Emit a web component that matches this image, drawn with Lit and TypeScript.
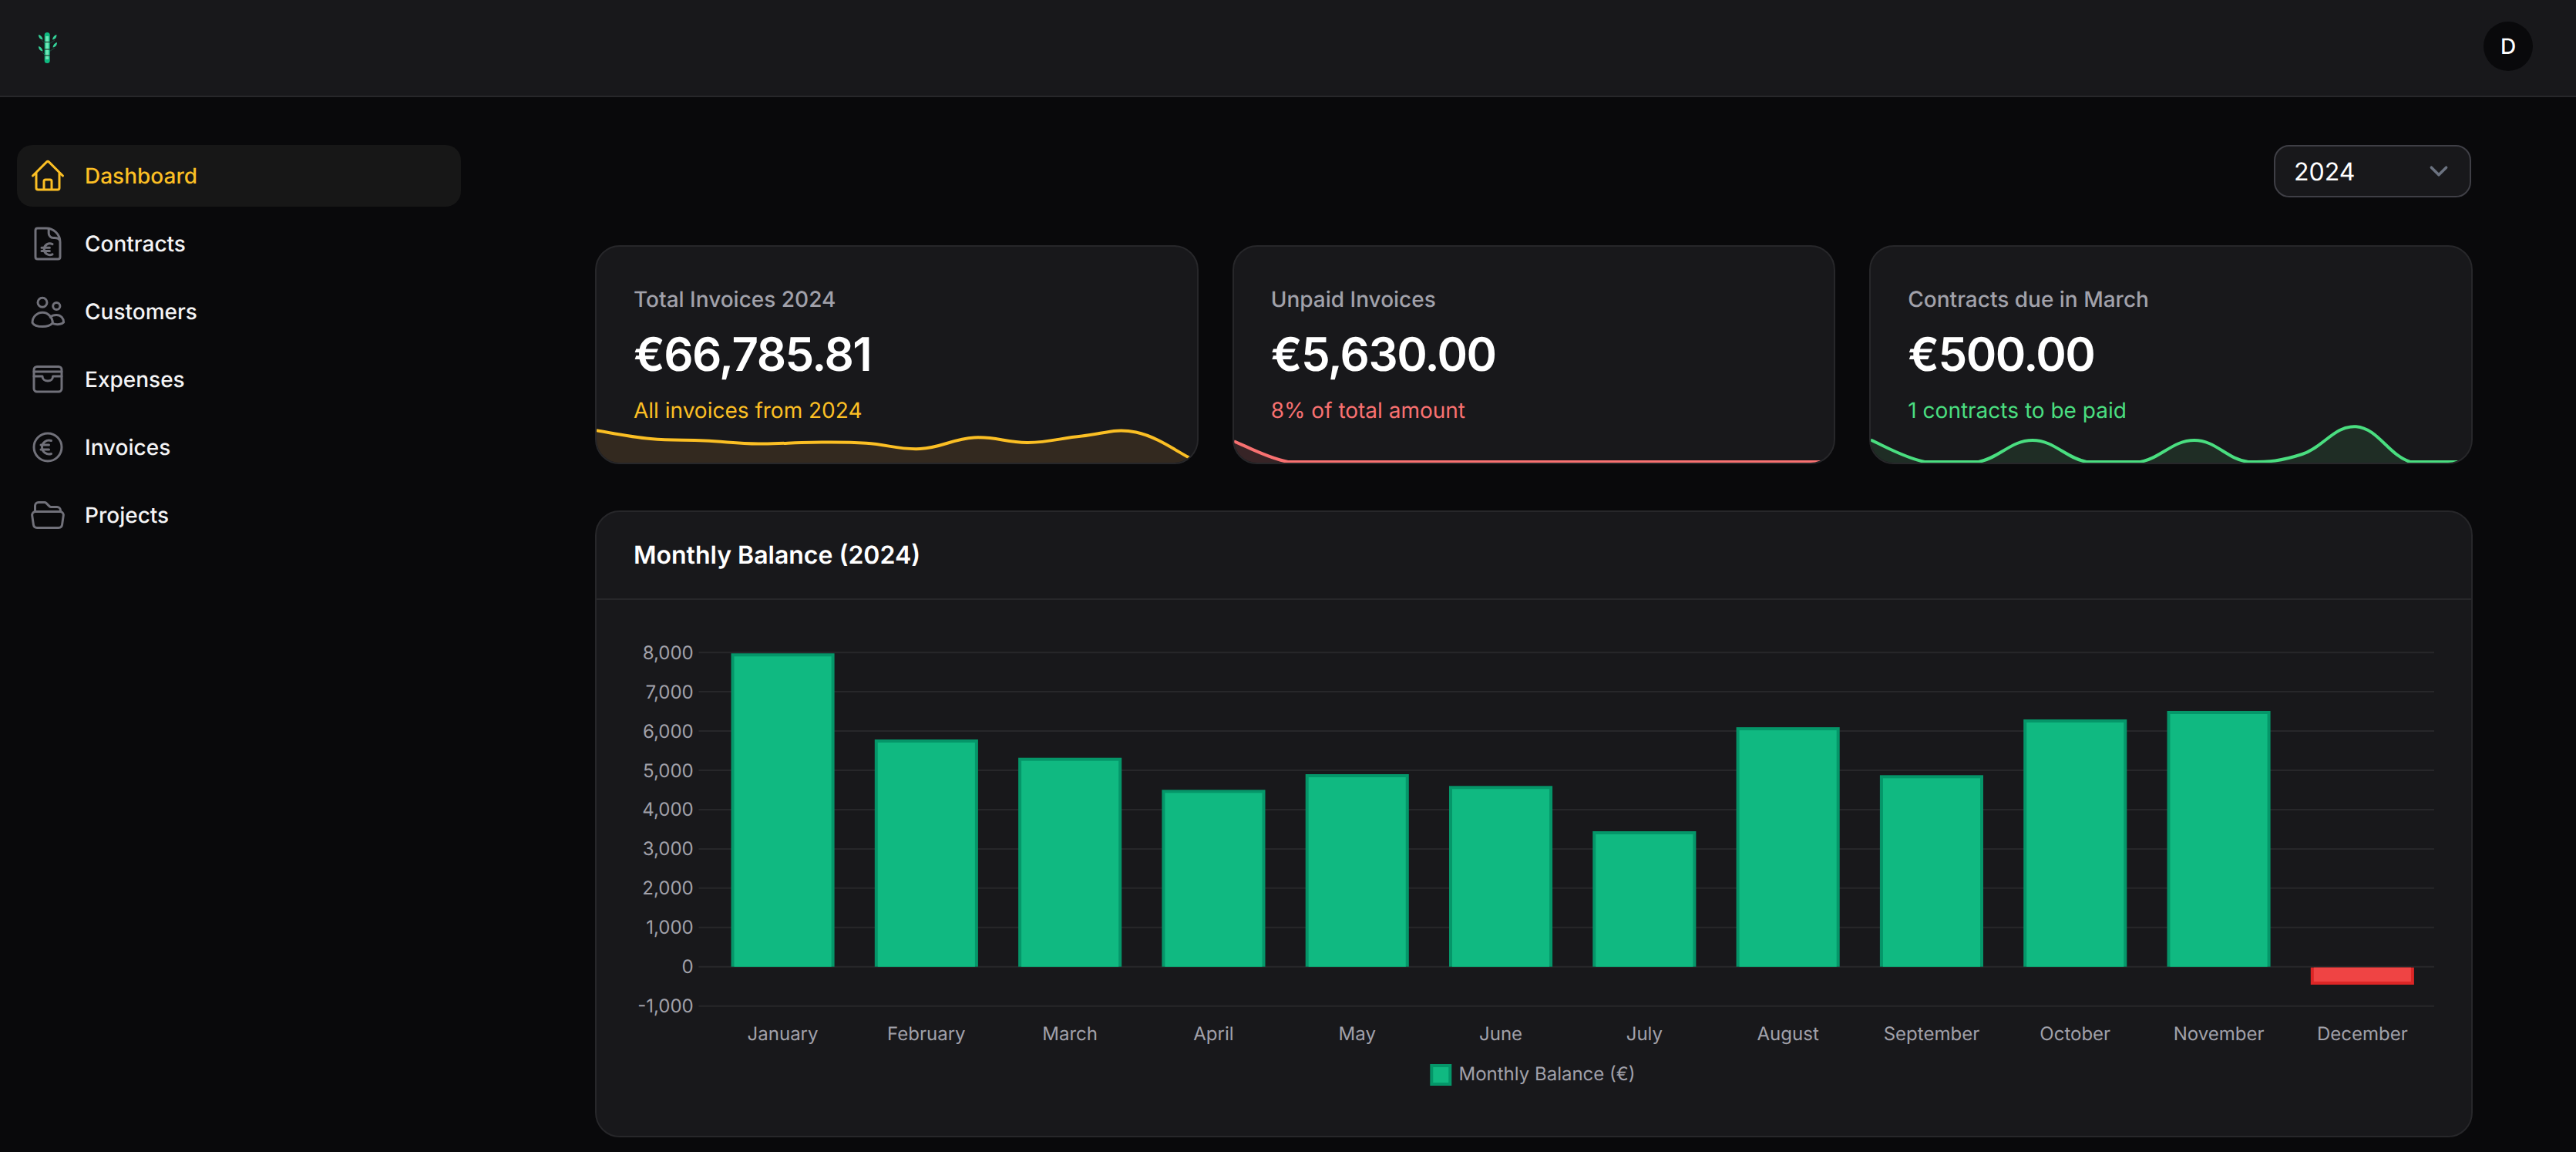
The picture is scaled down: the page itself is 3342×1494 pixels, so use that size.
import { LitElement, html, svg, css } from "lit";
import { customElement } from "lit/decorators.js";

type Pt = [number, number];

/* Same spline as the original chart: tension 0.4 on evenly spaced monthly points. */
function smooth(values: number[]): string {
  const pts: Pt[] = values.map((v, i) => [i * 70, v]);
  let d = `M${pts[0][0]} ${pts[0][1]}`;
  for (let i = 0; i < pts.length - 1; i++) {
    const p0 = pts[Math.max(0, i - 1)];
    const p1 = pts[i];
    const p2 = pts[i + 1];
    const p3 = pts[Math.min(pts.length - 1, i + 2)];
    const c1x = p1[0] + (p2[0] - p0[0]) * 0.2;
    const c1y = Math.min(99, p1[1] + (p2[1] - p0[1]) * 0.2);
    const c2x = p2[0] - (p3[0] - p1[0]) * 0.2;
    const c2y = Math.min(99, p2[1] - (p3[1] - p1[1]) * 0.2);
    d += `C${c1x.toFixed(1)} ${c1y.toFixed(1)} ${c2x.toFixed(1)} ${c2y.toFixed(1)} ${p2[0]} ${p2[1]}`;
  }
  return d;
}

const stats = [
  { label: "Total Invoices 2024", value: "€66,785.81", note: "All invoices from 2024", tone: "amber",
    series: [58.3, 69, 71.5, 75.5, 73.7, 74.7, 82, 67.5, 74, 65.5, 60.5, 94] },
  { label: "Unpaid Invoices", value: "€5,630.00", note: "8% of total amount", tone: "red",
    series: [72.3, 99, 99, 99, 99, 99, 99, 99, 99, 99, 99, 99] },
  { label: "Contracts due in March", value: "€500.00", note: "1 contracts to be paid", tone: "green",
    series: [70.7, 99, 99, 71, 99, 99, 71, 99, 89, 53.3, 99, 99] },
];

const months: [string, number][] = [
  ["January", 7978], ["February", 5785], ["March", 5320], ["April", 4503],
  ["May", 4902], ["June", 4602], ["July", 3449], ["August", 6097],
  ["September", 4876], ["October", 6296], ["November", 6512], ["December", -457],
];

const ZERO = 427.7;
const STEP = 50.94;
const LEFT = 100.4;
const SLOT = 186.3;
const BAR = 134.1;
const ticks = [8, 7, 6, 5, 4, 3, 2, 1, 0, -1];

const icons = {
  home: svg`<path d="M2.25 12l8.954-8.955c.44-.439 1.152-.439 1.591 0L21.75 12M4.5 9.75v10.125c0 .621.504 1.125 1.125 1.125H9.500v-5.500c0-.6.4-1 1-1h3c.6 0 1 .4 1 1V21h3.875c.621 0 1.125-.504 1.125-1.125V9.75M8.25 21h7.5"/>`,
  contract: svg`<path d="M10.9 2H5.4C4.6 2 4 2.6 4 3.4v17.2c0 .8.6 1.4 1.4 1.4h13.2c.8 0 1.4-.6 1.4-1.4V11a9 9 0 0 0-9.1-9z"/><path d="M12.6 2.3v3c0 1.6 1.3 3 3 3h1c1.3 0 2.500.5 3.200 1.400"/><path d="M15 12.3a3.7 3.7 0 1 0 0 6.6M8 14.6h5.2M8 16.7h5.2"/>`,
  users: svg`<circle cx="8.5" cy="6.15" r="3"/><circle cx="17.65" cy="8.5" r="2.3"/><path d="M2 19.2C2 15.5 5 12.6 8.6 12.6c3.4 0 6.4 2.9 6.6 6.8-1.4 1.6-4.2 2.4-6.6 2.4-2.6 0-5.6-.8-6.6-2.6z"/><path d="M13.6 15.6c1-.9 2.4-1.4 4-1.4 2.9 0 4.7 2.3 4.7 4.8-1.1 1.3-4.3 1.8-7 .8"/>`,
  wallet: svg`<rect x="3" y="3.75" width="18" height="16.25" rx="2"/><path d="M3 7h18M3 10h5.5c0 1.8 1.5 3 3.5 3s3.3-1.2 3.3-3H21"/>`,
  euro: svg`<path d="M14.25 7.756a4.5 4.5 0 100 8.488M7.5 10.5h5.25m-5.25 3h5.25M21 12a9 9 0 11-18 0 9 9 0 0118 0z"/>`,
  folder: svg`<path d="M3.75 9.776c.112-.017.227-.026.344-.026h15.812c.117 0 .232.009.344.026m-16.5 0a2.25 2.25 0 00-1.883 2.542l.857 6a2.25 2.25 0 002.227 1.932H19.05a2.25 2.25 0 002.227-1.932l.857-6a2.25 2.25 0 00-1.883-2.542m-16.5 0V6A2.25 2.25 0 016 3.75h3.879a1.5 1.5 0 011.06.44l2.122 2.12a1.5 1.5 0 001.06.44H18A2.25 2.25 0 0120.25 9v.776"/>`,
};

const nav = [
  { label: "Dashboard", icon: icons.home, active: true },
  { label: "Contracts", icon: icons.contract, active: false },
  { label: "Customers", icon: icons.users, active: false },
  { label: "Expenses", icon: icons.wallet, active: false },
  { label: "Invoices", icon: icons.euro, active: false },
  { label: "Projects", icon: icons.folder, active: false },
];

@customElement("app-root")
export class AppRoot extends LitElement {
  static styles = css`
    :host {
      display: block;
      height: 1494px;
      overflow: hidden;
      background: #09090b;
      color: #fff;
      font-family: Inter, "Liberation Sans", sans-serif;
      text-rendering: geometricPrecision;
    }
    .header {
      box-sizing: border-box;
      height: 126px;
      display: flex;
      align-items: center;
      justify-content: space-between;
      padding: 0 56px 0 41px;
      background: #18181b;
      border-bottom: 2px solid #27272a;
    }
    .logo { display: block; width: 40px; height: 48px; }
    .avatar {
      width: 64px;
      height: 64px;
      border-radius: 50%;
      background: #09090b;
      display: flex;
      align-items: center;
      justify-content: center;
      font-size: 28px;
      font-weight: 500;
      margin-top: -4px;
    }
    .layout { display: grid; grid-template-columns: 620px 1fr; }
    .sidebar {
      padding: 62px 22px 0;
      display: flex;
      flex-direction: column;
      gap: 8px;
    }
    .item {
      height: 80px;
      display: flex;
      align-items: center;
      gap: 24px;
      padding: 0 16px;
      border-radius: 20px;
      font-size: 28px;
      font-weight: 500;
      color: #f4f4f5;
    }
    .item.active { background: #171717; color: #fbbf24; }
    .icon {
      width: 48px;
      height: 48px;
      flex: none;
      fill: none;
      stroke: #71717a;
      stroke-width: 1.5;
      stroke-linecap: round;
      stroke-linejoin: round;
    }
    .active .icon { stroke: #fbbf24; }
    .main { padding: 62px 134px 0 152px; min-width: 0; }
    .toolbar {
      display: flex;
      justify-content: flex-end;
      padding-right: 2px;
      margin-bottom: 62px;
    }
    .select {
      box-sizing: border-box;
      width: 256px;
      height: 68px;
      display: flex;
      align-items: center;
      justify-content: space-between;
      padding: 0 16px 0 24px;
      background: #18181b;
      border: 2px solid #3f3f46;
      border-radius: 20px;
      font-size: 32px;
    }
    .chevron {
      width: 48px;
      height: 48px;
      fill: none;
      stroke: #6b7280;
      stroke-width: 1.5;
      stroke-linecap: round;
      stroke-linejoin: round;
    }
    .cards {
      display: grid;
      grid-template-columns: repeat(3, 1fr);
      gap: 44px;
      margin-bottom: 60px;
    }
    .card {
      position: relative;
      overflow: hidden;
      padding: 48px;
      background: #18181b;
      border: 2px solid #27272a;
      border-radius: 32px;
    }
    .label { font-size: 28px; line-height: 40px; font-weight: 500; color: #a1a1aa; }
    .value {
      font-size: 60px;
      line-height: 72px;
      font-weight: 600;
      letter-spacing: -1.5px;
      margin-top: 16px;
      color: #fff;
    }
    .note { font-size: 28px; line-height: 40px; margin-top: 16px; }
    .note.amber { color: #fbbf24; }
    .note.red { color: #f87171; }
    .note.green { color: #4ade80; }
    .spark {
      position: absolute;
      left: 0;
      bottom: 0;
      width: 100%;
      height: 100px;
      display: block;
    }
    .spark .line { fill: none; stroke-width: 4; stroke-linejoin: round; }
    .spark .area { stroke: none; }
    .spark.amber .line { stroke: #fbbf24; }
    .spark.amber .area { fill: #33291f; }
    .spark.red .line { stroke: #f87171; }
    .spark.red .area { fill: #372426; }
    .spark.green .line { stroke: #4ade80; }
    .spark.green .area { fill: #1f2d25; }
    .panel {
      background: #18181b;
      border: 2px solid #27272a;
      border-radius: 32px;
    }
    .panel-head {
      padding: 32px 48px;
      font-size: 32px;
      line-height: 48px;
      font-weight: 600;
      border-bottom: 2px solid #27272a;
    }
    .panel-body { padding: 48px; }
    .chart { display: block; width: 2336px; height: 599px; }
    .grid { stroke: #27272a; stroke-width: 2; }
    .tick { font-size: 24px; fill: #a1a1aa; dominant-baseline: central; }
    .tick.y { text-anchor: end; }
    .tick.x { text-anchor: middle; }
    .edge-pos { fill: #059669; }
    .fill-pos { fill: #10b981; }
    .edge-neg { fill: #dc2626; }
    .fill-neg { fill: #ef4444; }
  `;

  private bar(i: number, v: number) {
    const x = LEFT + i * SLOT + (SLOT - BAR) / 2;
    const h = (Math.abs(v) / 1000) * STEP;
    if (v >= 0) {
      const y = ZERO - h;
      return svg`<rect class="edge-pos" x=${x} y=${y} width=${BAR} height=${h}></rect>
        <rect class="fill-pos" x=${x + 4} y=${y + 4} width=${BAR - 8} height=${h - 4}></rect>`;
    }
    const y = ZERO + 1;
    return svg`<rect class="edge-neg" x=${x} y=${y} width=${BAR} height=${h - 1}></rect>
      <rect class="fill-neg" x=${x + 4} y=${y} width=${BAR - 8} height=${h - 5}></rect>`;
  }

  render() {
    return html`
      <header class="header">
        <svg class="logo" viewBox="0 0 40 48">
          <g fill="none" stroke="#1f4a3f" stroke-width="1">
            <path d="M13 14l6 6M30 14l-10 7M30 24l-10 7M13 29l6 6"></path>
          </g>
          <g fill="#34d399">
            <path d="M9 7c3 .5 5 3 5.5 6.5C11 13 9 10.500 9 7z"></path>
            <path d="M32.500 7c-3 .5-5 3-5.500 6.500 3.500-.5 5.500-3 5.500-6.500z"></path>
            <path d="M33 17c-3 .5-5 3-5.500 6.500 3.500-.5 5.500-3 5.500-6.500z"></path>
            <path d="M9 22c3 .5 5 3 5.500 6.500C11 28 9 25.500 9 22z"></path>
          </g>
          <rect x="16.700" y="4" width="7" height="40" rx="3.500" fill="#10b981"></rect>
          <rect x="18.200" y="9" width="4" height="30" fill="#6ee7b7"></rect>
          <path d="M16.700 16.500h7M16.700 26h7M16.700 34h7" stroke="#18181b" stroke-width="1.200"></path>
        </svg>
        <div class="avatar">D</div>
      </header>
      <div class="layout">
        <nav class="sidebar">
          ${nav.map(
            (n) => html`<div class="item ${n.active ? "active" : ""}">
              <svg class="icon" viewBox="0 0 24 24">${n.icon}</svg>
              <span>${n.label}</span>
            </div>`
          )}
        </nav>
        <main class="main">
          <div class="toolbar">
            <div class="select">
              <span>2024</span>
              <svg class="chevron" viewBox="0 0 20 20"><path d="M6 8l4 4 4-4"></path></svg>
            </div>
          </div>
          <section class="cards">
            ${stats.map((s) => {
              const line = smooth(s.series);
              return html`<article class="card">
                <div class="label">${s.label}</div>
                <div class="value">${s.value}</div>
                <div class="note ${s.tone}">${s.note}</div>
                <svg class="spark ${s.tone}" viewBox="0 0 779 100" preserveAspectRatio="none">
                  <path class="area" d="${line}L770 100L0 100Z"></path>
                  <path class="line" d=${line}></path>
                </svg>
              </article>`;
            })}
          </section>
          <section class="panel">
            <div class="panel-head">Monthly Balance (2024)</div>
            <div class="panel-body">
              <svg class="chart" viewBox="0 0 2336 599">
                ${ticks.map((t) => {
                  const y = ZERO - t * STEP;
                  const label = t === 0 ? "0" : `${t < 0 ? "-" : ""}${Math.abs(t)},000`;
                  return svg`<line class="grid" x1="84.400" x2="2336" y1=${y} y2=${y}></line>
                    <text class="tick y" x="77.700" y=${y}>${label}</text>`;
                })}
                ${months.map(([name, v], i) => svg`
                  ${this.bar(i, v)}
                  <text class="tick x" x=${LEFT + i * SLOT + SLOT / 2} y="514.700">${name}</text>
                `)}
                <rect class="edge-pos" x="1033.300" y="554" width="28" height="28"></rect>
                <rect class="fill-pos" x="1037.300" y="558" width="20" height="20"></rect>
                <text class="tick" x="1070.500" y="566">Monthly Balance (€)</text>
              </svg>
            </div>
          </section>
        </main>
      </div>
    `;
  }
}
